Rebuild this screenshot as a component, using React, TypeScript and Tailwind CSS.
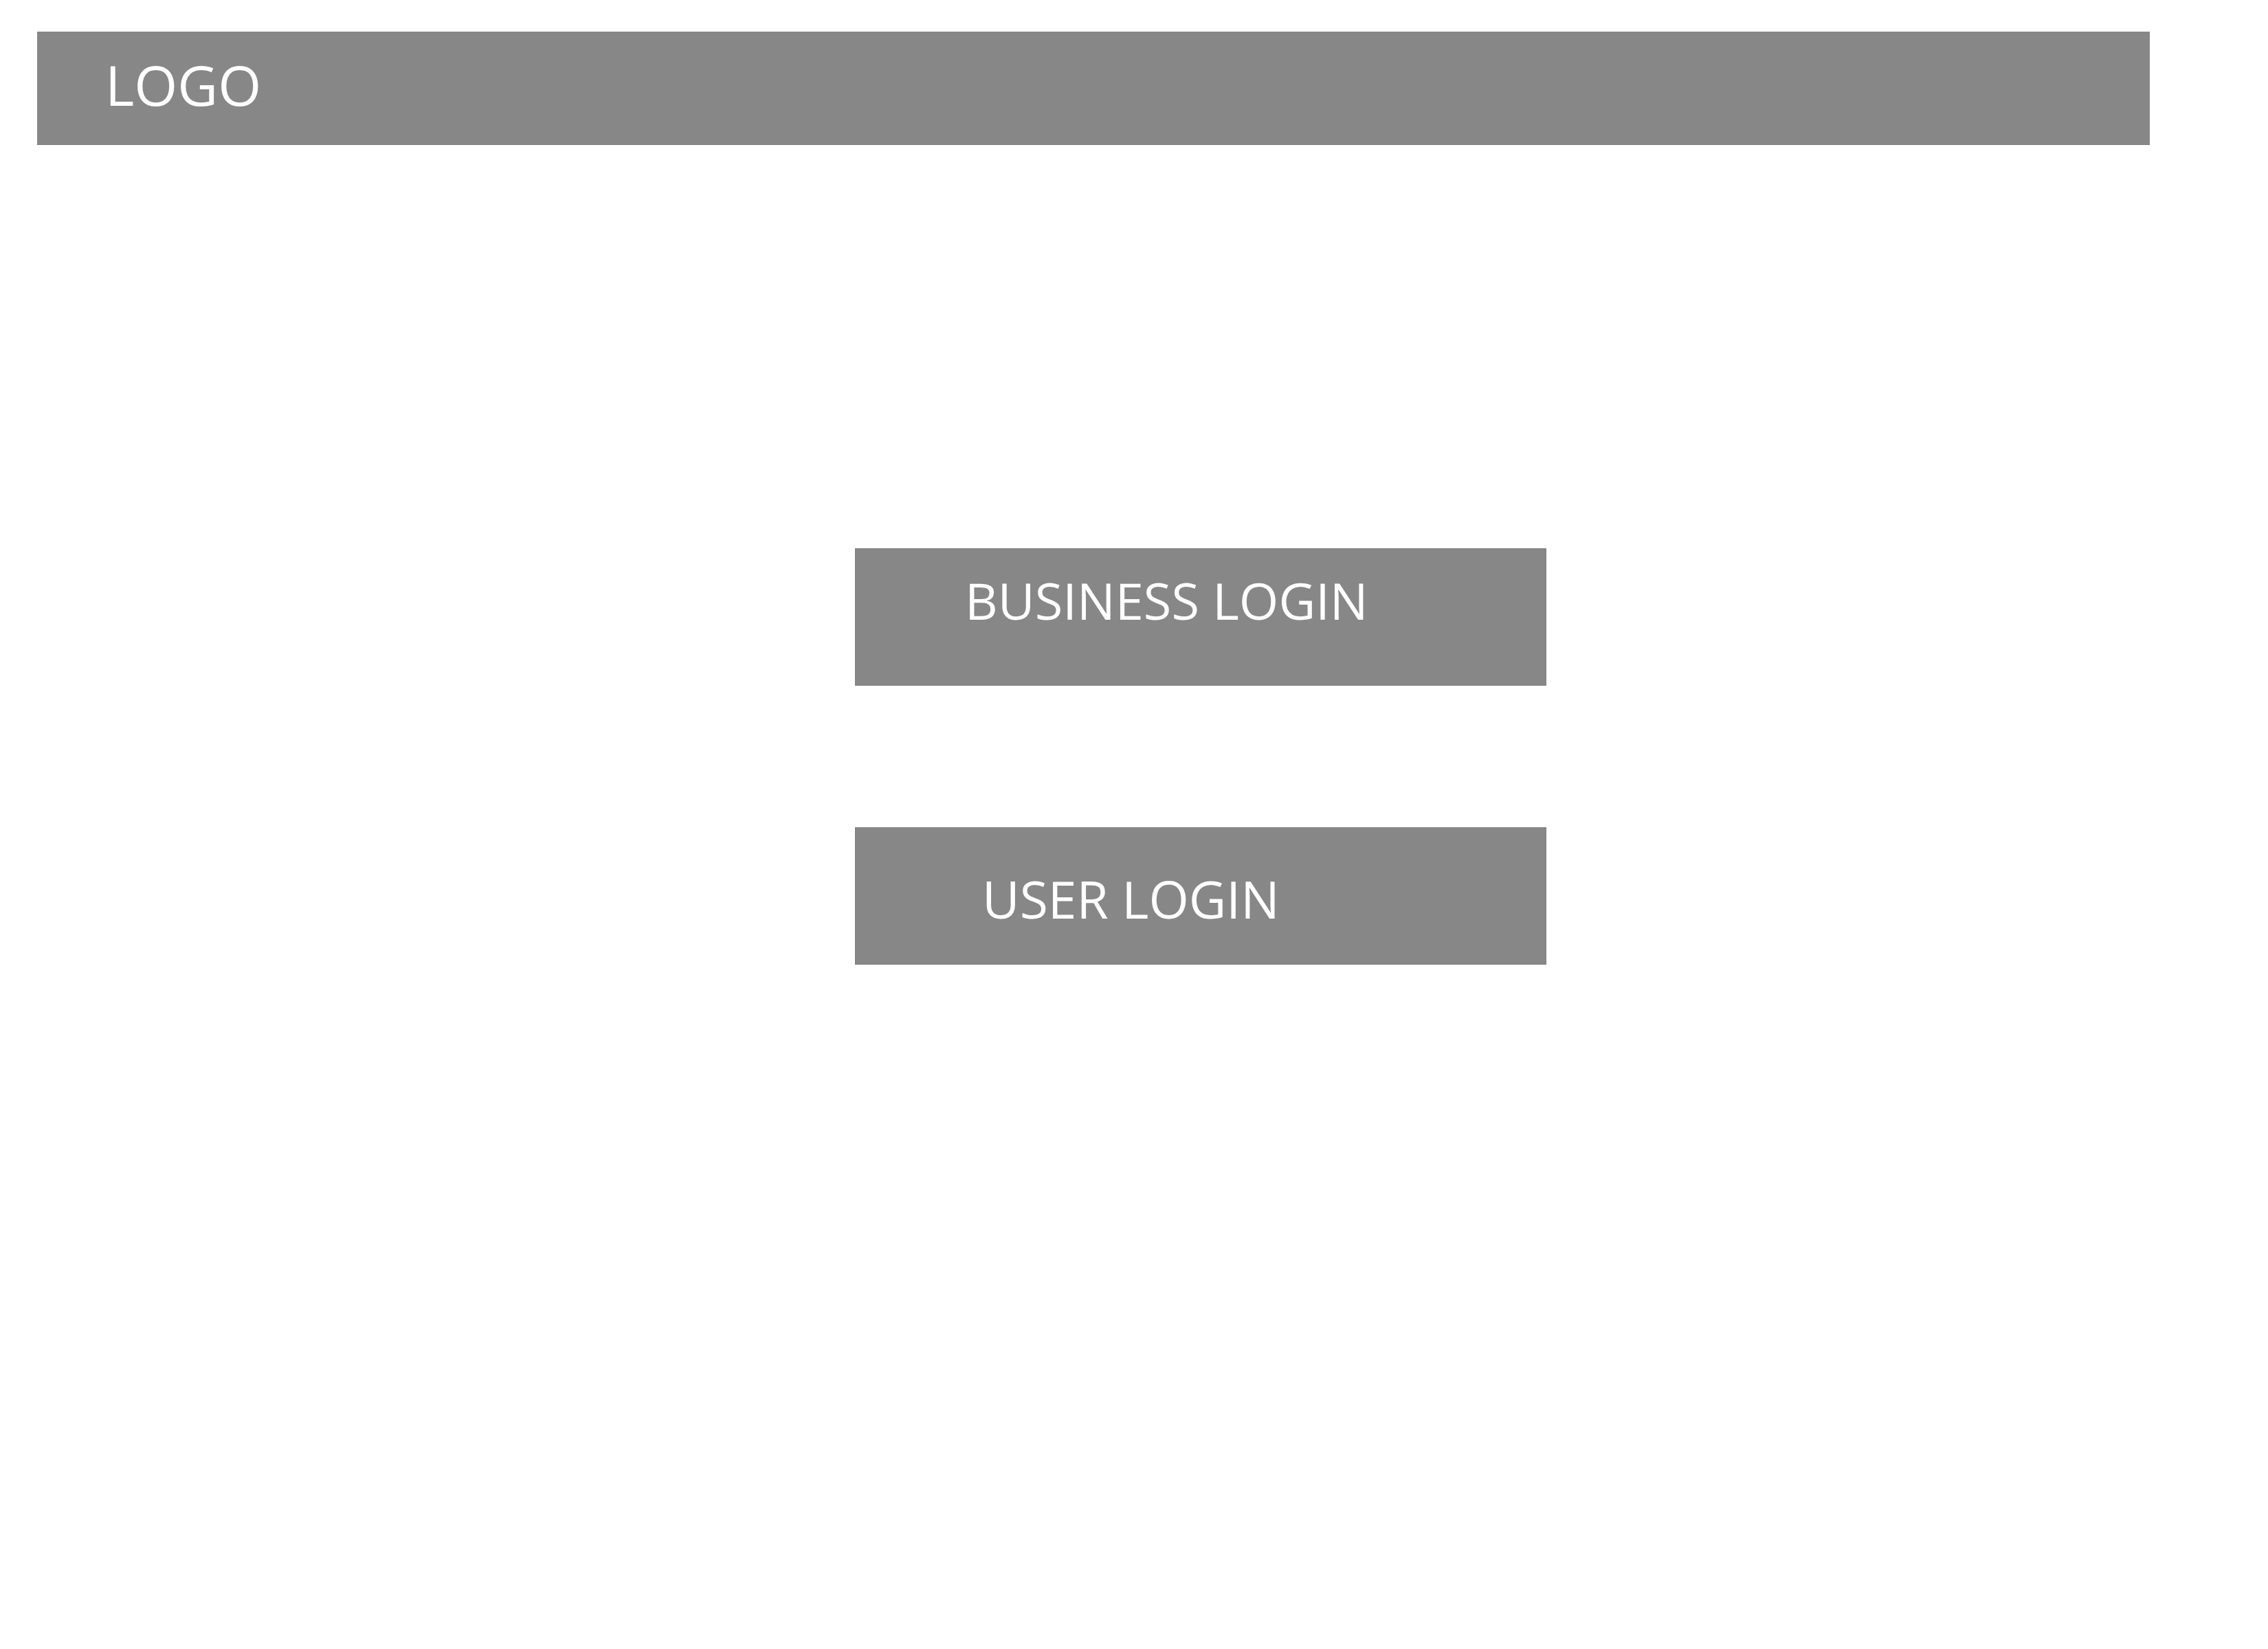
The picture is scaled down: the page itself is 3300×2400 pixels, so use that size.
import React from 'react';

const LoginButton: React.FC<{ label: string; padClass: string }> = ({ label, padClass }) => (
  <button
    type="button"
    className={`w-[1006px] h-[200px] bg-[#878787] border border-[#7d7d7d] text-left text-white leading-none tracking-normal ${padClass}`}
    style={{ fontFamily: '"Open Sans", "Noto Sans", sans-serif' }}
  >
    {label}
  </button>
);

export default function App() {
  return (
    <div className="min-h-screen w-full bg-white" style={{ fontFamily: '"Open Sans", "Noto Sans", sans-serif' }}>
      {/* Top bar */}
      <header className="ml-[54px] pt-[46px]">
        <div className="w-[3074px] h-[165px] bg-[#878787] border-b border-[#7d7d7d] pl-[99px] pt-[36px]">
          <span className="text-white text-[81px] leading-none">LOGO</span>
        </div>
      </header>

      {/* Login choices */}
      <main className="ml-[1244px] mt-[587px] flex flex-col gap-[206px]">
        <LoginButton label="BUSINESS LOGIN" padClass="text-[74px] pl-[159px] pt-[38px] pb-0 flex items-start" />
        <LoginButton label="USER LOGIN" padClass="text-[75px] pl-[184px] pt-[66px] pb-0 flex items-start" />
      </main>
    </div>
  );
}
